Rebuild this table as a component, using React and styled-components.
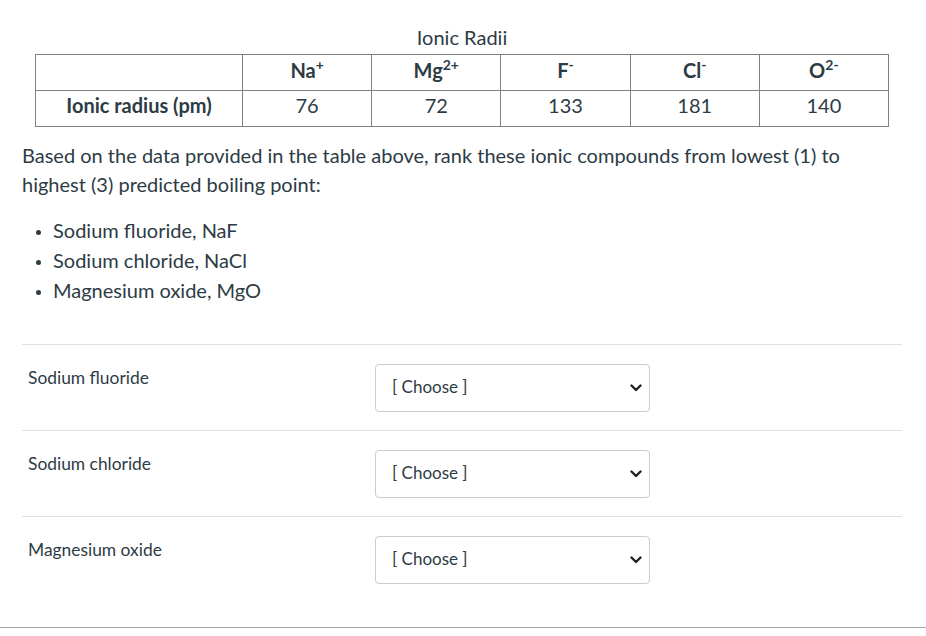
import React from "react";
import styled, { createGlobalStyle } from "styled-components";

const Global = createGlobalStyle`
  html, body { margin: 0; padding: 0; background: #fff; }
  body { font-family: Lato, "Noto Sans", sans-serif; color: #2d3b45; }
`;

const Page = styled.div`
  width: 926px;
  height: 636px;
  display: flex;
  flex-direction: column;
`;

const Content = styled.div`
  padding: 26px 24px 0 22px;
  display: flex;
  flex-direction: column;
`;

const RadiiTable = styled.table`
  width: 853px;
  margin: 0 auto;
  border-collapse: collapse;
  table-layout: fixed;
  font-size: 20px;
  color: #2d3b45;
`;

const Caption = styled.caption`
  font-size: 20px;
  line-height: 22px;
  padding-bottom: 6px;
`;

const Col = styled.col`
  width: ${(p) => (p.$wide ? "207px" : "129.2px")};
`;

const Cell = styled.td`
  border: 1px solid #808080;
  height: 36px;
  padding: 0 0 ${(p) => (p.$head ? "5px" : "7px")} 0;
  box-sizing: border-box;
  text-align: center;
  vertical-align: middle;
  font-weight: ${(p) => (p.$bold ? 700 : 400)};
  line-height: 20px;
`;

const Sup = styled.sup`
  font-size: 14px;
  line-height: 0;
  vertical-align: 8px;
`;

const Para = styled.p`
  margin: 14px 0 0 0;
  font-size: 20px;
  line-height: 29px;
`;

const List = styled.ul`
  margin: 16px 0 0 0;
  padding-left: 31px;
  font-size: 20px;
  line-height: 30px;
  li::marker { font-size: 15px; }
`;

const Answers = styled.div`
  margin-top: 39px;
  width: 880px;
`;

const AnswerRow = styled.div`
  display: grid;
  grid-template-columns: 347px 275px;
  align-items: start;
  border-top: 1px solid #e0e0e0;
  padding: 19px 0 18px 6px;
`;

const Label = styled.div`
  font-size: 17.4px;
  line-height: 24px;
  padding-top: 2px;
  color: #2d3b45;
`;

const SelectWrap = styled.div`
  position: relative;
  width: 275px;
  height: 48px;
`;

const Select = styled.select`
  appearance: none;
  -webkit-appearance: none;
  width: 275px;
  height: 48px;
  font-family: Lato, "Noto Sans", sans-serif;
  font-size: 17px;
  color: #2d3b45;
  background: #fff;
  border: 1px solid #c7cdd1;
  border-radius: 4px;
  padding: 0 30px 3px 16px;
`;

const Chevron = styled.svg`
  position: absolute;
  right: 8px;
  top: 20px;
  width: 12px;
  height: 8px;
  pointer-events: none;
`;

const Footer = styled.div`
  margin-top: auto;
  margin-bottom: 8px;
  border-top: 1px solid #a5a5a5;
`;

const headers = [
  ["Na", "+"],
  ["Mg", "2+"],
  ["F", "-"],
  ["Cl", "-"],
  ["O", "2-"],
];
const values = ["76", "72", "133", "181", "140"];
const compounds = ["Sodium fluoride", "Sodium chloride", "Magnesium oxide"];

export default function App() {
  return (
    <Page>
      <Global />
      <Content>
        <RadiiTable>
          <Caption>Ionic Radii</Caption>
          <colgroup>
            <Col $wide />
            {values.map((v) => (
              <Col key={v} />
            ))}
          </colgroup>
          <tbody>
            <tr>
              <Cell $head />
              {headers.map(([b, s]) => (
                <Cell key={b} $head $bold>
                  {b}
                  <Sup>{s}</Sup>
                </Cell>
              ))}
            </tr>
            <tr>
              <Cell $bold>Ionic radius (pm)</Cell>
              {values.map((v) => (
                <Cell key={v}>{v}</Cell>
              ))}
            </tr>
          </tbody>
        </RadiiTable>
        <Para>
          Based on the data provided in the table above, rank these ionic compounds from lowest (1) to highest (3) predicted boiling point:
        </Para>
        <List>
          <li>Sodium fluoride, NaF</li>
          <li>Sodium chloride, NaCl</li>
          <li>Magnesium oxide, MgO</li>
        </List>
        <Answers>
          {compounds.map((c) => (
            <AnswerRow key={c}>
              <Label>{c}</Label>
              <SelectWrap>
                <Select defaultValue="">
                  <option value="">[ Choose ]</option>
                  <option value="1">1</option>
                  <option value="2">2</option>
                  <option value="3">3</option>
                </Select>
                <Chevron viewBox="0 0 12 8">
                  <path d="M1.5 1.5 L6 6 L10.5 1.5" fill="none" stroke="#222" strokeWidth="2.4" strokeLinecap="round" strokeLinejoin="round" />
                </Chevron>
              </SelectWrap>
            </AnswerRow>
          ))}
        </Answers>
      </Content>
      <Footer />
    </Page>
  );
}
